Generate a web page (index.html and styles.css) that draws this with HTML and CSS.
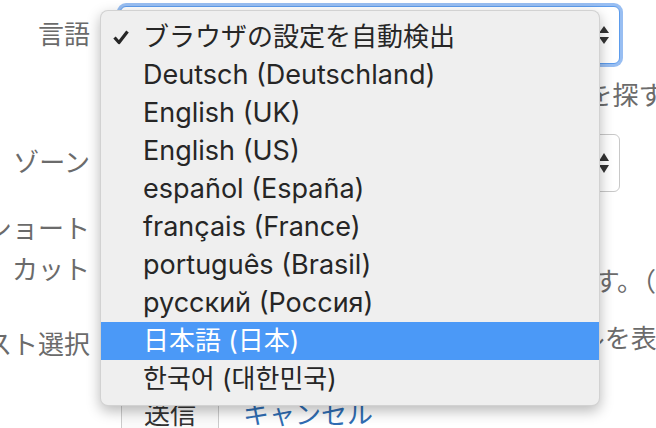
FILE: index.html
```html
<!DOCTYPE html>
<html lang="ja">
<head>
    <meta charset="UTF-8">
    <meta name="viewport" content="width=device-width, initial-scale=1.0">
    <title>設定</title>
    <link rel="stylesheet" href="styles.css">
</head>
<body>

    <!-- Settings form (behind the open menu) -->
    <div class="form">
        <div class="row">
            <label class="label">言語</label>
            <div class="select focused">
                <span class="value">日本語 (日本)</span>
                <svg class="arrows" width="12" height="20" viewBox="0 0 12 20">
                    <path d="M1 8 L6 1 L11 8 Z" fill="#333"/>
                    <path d="M1 12 L6 19 L11 12 Z" fill="#333"/>
                </svg>
            </div>
        </div>
        <p class="help">表示言語がない場合は翻訳コミュニティを探す</p>

        <div class="row row-zone">
            <label class="label">タイム　ゾーン</label>
            <div class="select">
                <span class="value">(UTC+09:00) 東京</span>
                <svg class="arrows" width="12" height="24" viewBox="0 0 12 24">
                    <path d="M1 10 L6 2 L11 10 Z" fill="#333"/>
                    <path d="M1 14 L6 22 L11 14 Z" fill="#333"/>
                </svg>
            </div>
        </div>

        <div class="row row-shortcut">
            <label class="label tall">ショート<br>カット</label>
            <p class="desc">ショートカットを有効にすると、<br>ショートカットキーで翻訳を呼び出しま す。（Alt+T）</p>
        </div>

        <div class="row row-select">
            <label class="label tall nudge">テキスト選択</label>
            <p class="desc">テキストを選択すると近くに1つのツールを表示します</p>
        </div>

        <div class="actions">
            <button class="submit">送信</button>
            <a class="cancel" href="#">キャンセル</a>
        </div>
    </div>

    <!-- Open language menu -->
    <ul class="menu">
        <li class="item checked">
            <svg class="check" width="18" height="16" viewBox="0 0 18 16">
                <polyline points="2.5,8.5 7,13.5 15.5,2.5" fill="none" stroke="#262626" stroke-width="3.2" stroke-linejoin="round"/>
            </svg>
            ブラウザの設定を自動検出
        </li>
        <li class="item latin">Deutsch (Deutschland)</li>
        <li class="item latin">English (UK)</li>
        <li class="item latin">English (US)</li>
        <li class="item latin">español (España)</li>
        <li class="item latin">français (France)</li>
        <li class="item latin">português (Brasil)</li>
        <li class="item latin">русский (Россия)</li>
        <li class="item active">日本語 (日本)</li>
        <li class="item" lang="ko">한국어 (대한민국)</li>
    </ul>

</body>
</html>
```

FILE: styles.css
```css
body {
    margin: 0;
    background: #ffffff;
    font-family: "Liberation Sans", "Noto Sans CJK JP", sans-serif;
    font-size: 26px;
    color: #6b6b6b;
    overflow: hidden;
    height: 428px;
}
.form {
    margin-left: -110px;
    padding-top: 6px;
}
.row {
    display: grid;
    grid-template-columns: 200px 640px;
    column-gap: 30px;
    align-items: center;
}
.label {
    text-align: right;
    white-space: nowrap;
    line-height: 31px;
}
.label.tall {
    line-height: 41px;
}
.label.nudge {
    padding-top: 6px;
}
.select {
    width: 500px;
    height: 58px;
    box-sizing: border-box;
    border: 1px solid #c8c8c8;
    border-radius: 6px;
    background: #ffffff;
    display: flex;
    align-items: center;
    justify-content: space-between;
    padding: 0 9px 0 16px;
    color: #333;
}
.select.focused {
    border-color: #5d9cec;
    box-shadow: 0 0 0 3px rgba(118, 168, 238, 0.75);
}
.help {
    margin: 17px 0 0 230px;
    line-height: 31px;
    white-space: nowrap;
}
.row-zone {
    margin-top: 22px;
}
.row-shortcut {
    margin-top: 17px;
    align-items: start;
}
.row-select {
    margin-top: 16px;
    align-items: start;
}
.desc {
    margin: 0;
    line-height: 41px;
    white-space: nowrap;
}
.row-select .desc {
    padding-left: 3px;
}
.row-shortcut .desc {
    padding-top: 12px;
}
.actions {
    margin: 25px 0 0 231px;
    display: flex;
    align-items: center;
    gap: 24px;
}
.submit {
    font: inherit;
    line-height: 31px;
    padding: 8px 22px;
    color: #333;
    background: #fafafa;
    border: 1px solid #cccccc;
    border-radius: 6px;
}
.cancel {
    color: #2f6db3;
    text-decoration: none;
    line-height: 31px;
}

/* open dropdown */
.menu {
    position: absolute;
    left: 100px;
    top: 10px;
    width: 500px;
    height: 396px;
    box-sizing: border-box;
    margin: 0;
    padding: 7px 0 9px;
    list-style: none;
    font-family: Inter, "Noto Sans CJK JP", sans-serif;
    background: #efefef;
    border: 1px solid rgba(0, 0, 0, 0.12);
    border-radius: 8px;
    box-shadow: 0 5px 14px rgba(0, 0, 0, 0.28);
    color: #262626;
}
.item {
    position: relative;
    height: 38px;
    line-height: 38px;
    padding-left: 42px;
    white-space: nowrap;
}
.item.latin {
    font-size: 27px;
}
.item[lang="ko"] {
    font-family: Inter, "Noto Sans CJK KR", sans-serif;
}
.item.active {
    background: #4b99f7;
    color: #ffffff;
}
.check {
    position: absolute;
    left: 11px;
    top: 11px;
}
```
